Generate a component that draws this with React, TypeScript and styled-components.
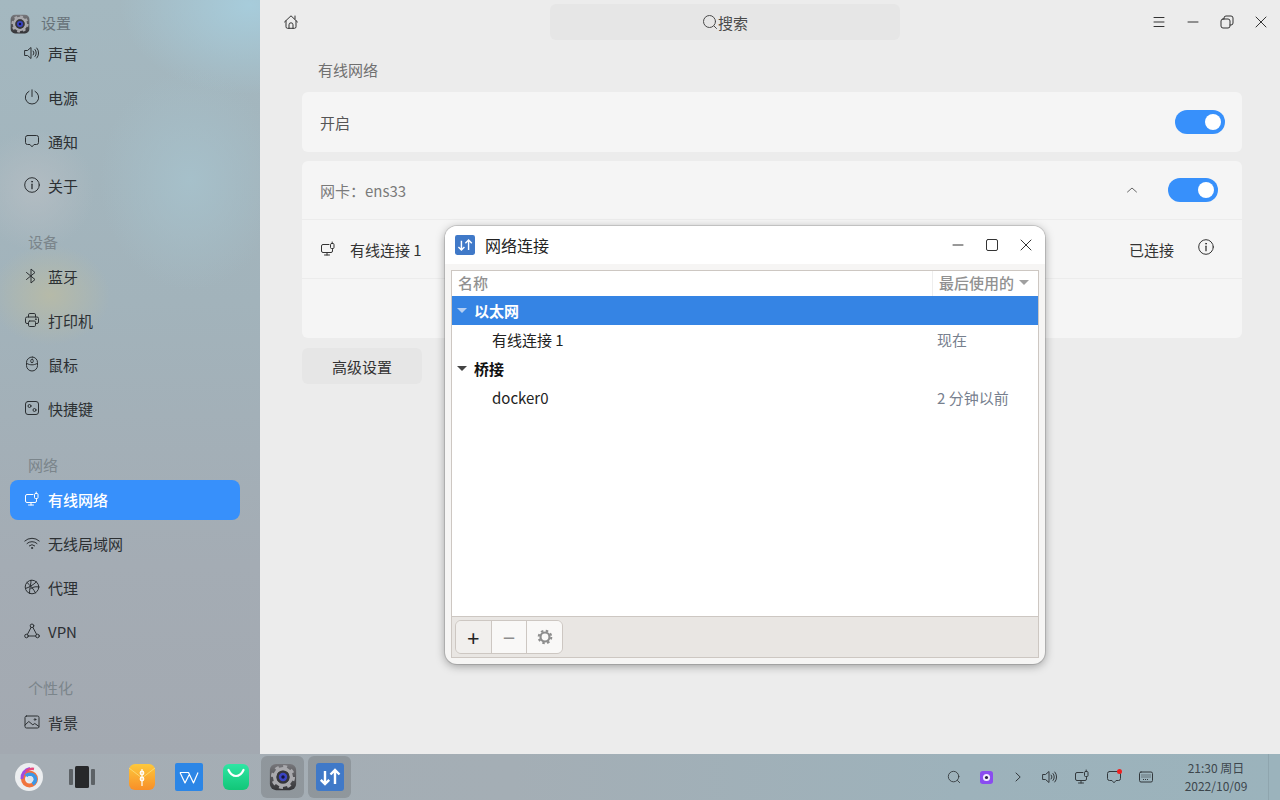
import React from 'react';
import styled, { createGlobalStyle } from 'styled-components';

const GlobalStyle = createGlobalStyle`
  html, body {
    margin: 0;
    padding: 0;
    width: 1280px;
    height: 800px;
    overflow: hidden;
    font-family: "Noto Sans CJK SC", "Noto Sans", sans-serif;
    font-size: 15px;
  }
  * { box-sizing: border-box; }
`;

const Line: React.FC<{ size?: number; sw?: number; children: React.ReactNode }> = ({ size = 16, sw = 1, children }) => (
  <svg width={size} height={size} viewBox="0 0 16 16" fill="none" stroke="currentColor" strokeWidth={sw} strokeLinecap="round" strokeLinejoin="round">
    {children}
  </svg>
);

const SoundIcon = () => (
  <Line>
    <path d="M1 5.500h2.500L7 2.500v11L3.500 10.500H1z" />
    <path d="M9.200 6a3 3 0 0 1 0 4M11 4.500a5.200 5.200 0 0 1 0 7M12.800 3a7.500 7.500 0 0 1 0 10" />
  </Line>
);
const PowerIcon = () => (
  <Line>
    <path d="M5 2.300a6.700 6.700 0 1 0 6 0" />
    <path d="M8 .8v6.700" />
  </Line>
);
const ChatIcon = () => (
  <Line>
    <path d="M3.500 2.500h9a2 2 0 0 1 2 2v5a2 2 0 0 1-2 2h-2.500L8 13.800 6 11.500H3.500a2 2 0 0 1-2-2v-5a2 2 0 0 1 2-2z" />
  </Line>
);
const InfoIcon = () => (
  <Line>
    <circle cx="8" cy="8" r="7.300" />
    <path d="M8 7.200v4.500" strokeWidth="1.300" />
    <circle cx="8" cy="4.700" r=".5" />
  </Line>
);
const BluetoothIcon = () => (
  <Line>
    <path d="M2.500 4.500l8.500 7L7 15V1l4 3.500L2.500 11.500" />
  </Line>
);
const PrinterIcon = () => (
  <Line>
    <path d="M4.500 5V2.800a1.300 1.300 0 0 1 1.300-1.300h4.400a1.300 1.300 0 0 1 1.300 1.300V5" />
    <path d="M4.500 11.500H3a1.500 1.500 0 0 1-1.500-1.500V6.500A1.500 1.500 0 0 1 3 5h10a1.500 1.500 0 0 1 1.500 1.500V10a1.500 1.500 0 0 1-1.500 1.500h-1.500" />
    <rect x="4.500" y="9" width="7" height="5.500" rx="1.200" />
    <circle cx="11.800" cy="7.200" r=".4" />
  </Line>
);
const MouseIcon = () => (
  <Line>
    <rect x="2.500" y="1" width="11" height="14" rx="5.500" />
    <path d="M2.800 7.500c2 1 3.500 1.300 5.200 1.300s3.200-.3 5.200-1.300" />
    <rect x="6.800" y="3.200" width="2.400" height="3.500" rx="1.200" />
  </Line>
);
const ShortcutIcon = () => (
  <Line>
    <rect x="1.500" y="1.500" width="13" height="13" rx="2.500" />
    <circle cx="5.500" cy="6" r="1.500" />
    <circle cx="10.500" cy="10" r="1.500" />
  </Line>
);
const WiredIcon = () => (
  <Line>
    <path d="M9 3.500H3a1.500 1.500 0 0 0-1.500 1.500v5A1.500 1.500 0 0 0 3 11.500h8A1.500 1.500 0 0 0 12.500 10V8.500" />
    <path d="M7 11.500v2.500M4.500 14h5" />
    <rect x="10.500" y="2.500" width="3.500" height="5" rx="1" />
    <path d="M12.200 1v1.500" />
  </Line>
);
const WifiIcon = () => (
  <Line>
    <path d="M.8 6a10.500 10.500 0 0 1 14.400 0M3 8.500a7.300 7.300 0 0 1 10 0M5.300 10.800a4 4 0 0 1 5.400 0" />
    <circle cx="8" cy="13" r=".6" />
  </Line>
);
const ProxyIcon = () => (
  <Line>
    <circle cx="8" cy="8" r="6.800" />
    <path d="M3 3.500c3 2.500 7 7 8.500 10.500M1.500 9.500C5 8.500 9 6 12.500 2.800M5.500 14.500C5 11 7.500 4 7 1.200M14.800 8c-2.500-.5-5-.5-8 1.500" />
  </Line>
);
const VpnIcon = () => (
  <Line>
    <circle cx="8" cy="2.800" r="1.800" />
    <circle cx="2.500" cy="13" r="1.800" />
    <circle cx="13.500" cy="13" r="1.800" />
    <path d="M7.100 4.400L3.400 11.400M8.900 4.400l3.700 7M4.300 13h7.400" />
  </Line>
);
const PictureIcon = () => (
  <Line>
    <rect x="1" y="2" width="14" height="12" rx="1.500" />
    <path d="M1 11l3.800-3.500 4 3.300 2-1.300L15 12.500" />
    <circle cx="11" cy="5.500" r=".8" />
  </Line>
);
const HomeIcon = () => (
  <Line>
    <path d="M1.500 8L8 1.800 14.500 8M3 6.800v6a1.500 1.500 0 0 0 1.500 1.500h7a1.500 1.500 0 0 0 1.500-1.500v-6" />
    <path d="M6 14.300v-3.500a2 2 0 0 1 4 0v3.500M12 2v3" />
  </Line>
);
const SearchIcon: React.FC<{ size?: number }> = ({ size = 16 }) => (
  <Line size={size}>
    <circle cx="7.500" cy="7.500" r="6" />
    <path d="M12 12l2.500 2.500" />
  </Line>
);
const RestoreIcon = () => (
  <Line>
    <rect x="2" y="5" width="9" height="9" rx="2" />
    <path d="M5 5V4a2 2 0 0 1 2-2h5a2 2 0 0 1 2 2v5a2 2 0 0 1-2 2h-1" />
  </Line>
);
const MenuIcon = () => (
  <Line>
    <path d="M3 3.500h10M3 8h10M3 12.500h10" />
  </Line>
);
const MinIcon = () => (
  <Line>
    <path d="M3 8h10" />
  </Line>
);
const CloseIcon = () => (
  <Line>
    <path d="M3 3l10 10M13 3L3 13" />
  </Line>
);
const MaxIcon = () => (
  <Line>
    <rect x="2.500" y="2.500" width="11" height="11" rx="1.500" />
  </Line>
);
const UpIcon = () => (
  <Line>
    <path d="M3.500 10L8 6l4.500 4" />
  </Line>
);
const GtIcon = () => (
  <Line>
    <path d="M6 4l4.200 4L6 12" />
  </Line>
);
const KeyboardIcon = () => (
  <Line>
    <rect x="1.500" y="3" width="13" height="10" rx="1.500" />
    <path d="M3.500 6h9M3.500 8h9M5 10.500h6" strokeDasharray="1 1" strokeLinecap="butt" strokeWidth="1.200" />
  </Line>
);

const GearTile: React.FC<{ size: number }> = ({ size }) => (
  <svg width={size} height={size} viewBox="0 0 32 32">
    <defs>
      <linearGradient id="gearbg" x1="0" y1="0" x2="0" y2="1">
        <stop offset="0" stopColor="#77777b" />
        <stop offset="1" stopColor="#343437" />
      </linearGradient>
    </defs>
    <rect x="1" y="1" width="30" height="30" rx="7" fill="url(#gearbg)" />
    <circle cx="16" cy="16" r="9.500" fill="none" stroke="#a9a9ad" strokeWidth="4" />
    <circle cx="16" cy="16" r="12" fill="none" stroke="#a9a9ad" strokeWidth="3.500" strokeDasharray="4.400 5" />
    <circle cx="16" cy="16" r="7.500" fill="#36363a" />
    <circle cx="16" cy="16" r="4.800" fill="#3a44c4" />
    <circle cx="16" cy="16" r="2" fill="#14143c" />
  </svg>
);

const NetTile: React.FC<{ size: number; sw?: number }> = ({ size, sw = 2 }) => (
  <svg width={size} height={size} viewBox="0 0 28 28">
    <rect width="28" height="28" rx="3" fill="#4079c8" />
    <path d="M9 8v13M4.800 16.800L9 21l4.200-4.200M19 21V7M14.500 11.500L19 7l4.500 4.500" fill="none" stroke="#fff" strokeWidth={sw} />
  </svg>
);

const LauncherLogo = () => (
  <svg width="28" height="28" viewBox="0 0 28 28">
    <circle cx="14" cy="14" r="14" fill="#eceef0" />
    <circle cx="14.500" cy="16" r="6.500" fill="none" stroke="#f0743e" strokeWidth="4" />
    <path d="M11 13a5.500 5.500 0 0 1 9.500 3.500 6 6 0 0 1-3 4.500" fill="none" stroke="#3a98e8" strokeWidth="3.500" />
    <path d="M7 16C6.500 11 10 6.500 15 5.500" fill="none" stroke="#a04be0" strokeWidth="3" />
    <path d="M11 8.500c2-2 5-3 8-2.500" fill="none" stroke="#e84a7c" strokeWidth="2.500" />
    <circle cx="15" cy="16" r="3" fill="#dfe6ee" />
  </svg>
);

const MultitaskIcon = () => (
  <svg width="26" height="22" viewBox="0 0 26 22">
    <rect x="0" y="3" width="4" height="16" rx="1" fill="#5d6266" />
    <rect x="6" y="0" width="14" height="22" rx="1.500" fill="#27282a" />
    <rect x="22" y="3" width="4" height="16" rx="1" fill="#5d6266" />
  </svg>
);

const ArchiveIcon = () => (
  <svg width="26" height="26" viewBox="0 0 26 26">
    <defs>
      <linearGradient id="archive" x1="0" y1="0" x2="0" y2="1">
        <stop offset="0" stopColor="#fdc83c" />
        <stop offset="1" stopColor="#f88f28" />
      </linearGradient>
    </defs>
    <rect width="26" height="26" rx="6" fill="url(#archive)" />
    <path d="M0 4l13 10L26 4" fill="none" stroke="#fbd870" strokeWidth="1" />
    <path d="M13 5v17" stroke="#fff" strokeWidth="1.200" />
    <circle cx="13" cy="9" r="1.800" fill="none" stroke="#fff" strokeWidth="1.200" />
    <circle cx="13" cy="15" r="1.800" fill="none" stroke="#fff" strokeWidth="1.200" />
  </svg>
);

const WpsIcon = () => (
  <svg width="28" height="28" viewBox="0 0 28 28">
    <rect width="28" height="28" rx="2" fill="#2c86e6" />
    <path d="M5 9.500h8.500L18.500 20 23 9.500M5 9.500L10 20l4-8" fill="none" stroke="#fff" strokeWidth="1.200" strokeLinejoin="round" />
  </svg>
);

const StoreIcon = () => (
  <svg width="26" height="26" viewBox="0 0 26 26">
    <defs>
      <linearGradient id="store" x1="0" y1="0" x2="0" y2="1">
        <stop offset="0" stopColor="#2fe6a4" />
        <stop offset="1" stopColor="#12c678" />
      </linearGradient>
    </defs>
    <rect width="26" height="26" rx="6" fill="url(#store)" />
    <path d="M5.500 6c2 4.500 4.800 6 7.500 6s5.500-1.500 7.500-6" fill="none" stroke="#fff" strokeWidth="2.200" strokeLinecap="round" />
  </svg>
);

const CameraTray = () => (
  <svg width="13" height="13" viewBox="0 0 14 14">
    <rect width="14" height="14" rx="3" fill="#8a4cf0" />
    <circle cx="7" cy="7" r="3.800" fill="#f2ecff" />
    <circle cx="7" cy="7" r="1.700" fill="#2a1f4a" />
  </svg>
);

const GearGlyph = () => (
  <svg width="16" height="16" viewBox="0 0 16 16">
    <circle cx="8" cy="8" r="4.500" fill="none" stroke="#8d8d8d" strokeWidth="2.200" />
    <circle cx="8" cy="8" r="6.300" fill="none" stroke="#8d8d8d" strokeWidth="2" strokeDasharray="2.500 2.450" />
  </svg>
);

const Screen = styled.div`
  width: 1280px;
  height: 800px;
  display: flex;
  flex-direction: column;
  position: relative;
  overflow: hidden;
`;

const Workspace = styled.div`
  flex: 1;
  min-height: 0;
  display: flex;
`;

const Sidebar = styled.aside`
  width: 260px;
  flex-shrink: 0;
  overflow: hidden;
  background:
    radial-gradient(60px 50px at 50px 295px, #b6baa8 0%, rgba(182, 186, 168, 0) 100%),
    radial-gradient(60px 60px at 35px 190px, #b2bcc2 0%, rgba(178, 188, 194, 0) 100%),
    radial-gradient(130px 90px at 250px 5px, #a7ccdb 0%, rgba(167, 204, 219, 0) 100%),
    radial-gradient(90px 110px at 190px 180px, #a6c0ca 0%, rgba(166, 192, 202, 0) 100%),
    linear-gradient(180deg, #a4b8c0 0%, #a2b3bb 40%, #a4acb4 75%, #a3a9b1 100%);
`;

const SidebarHead = styled.div`
  height: 34px;
  display: flex;
  align-items: flex-end;
  gap: 11px;
  padding-left: 10px;
`;

const AppTitle = styled.span`
  color: #68737a;
  font-size: 15px;
  line-height: 22px;
`;

const NavList = styled.nav`
  display: flex;
  flex-direction: column;
  gap: 4px;
  padding: 0 20px 0 10px;
`;

const NavItem = styled.div<{ $active?: boolean }>`
  height: 40px;
  display: flex;
  align-items: center;
  gap: 8px;
  padding: 0 0 2px 14px;
  border-radius: 8px;
  font-size: 15px;
  color: ${(p) => (p.$active ? '#ffffff' : '#2c3033')};
  background: ${(p) => (p.$active ? '#3790fb' : 'transparent')};
  font-weight: ${(p) => (p.$active ? 500 : 400)};
`;

const GroupLabel = styled.div`
  height: 43px;
  padding: 22px 0 0 18px;
  font-size: 15px;
  line-height: 20px;
  color: #7b858b;
`;

const Main = styled.main`
  flex: 1;
  min-width: 0;
  background: #ececec;
  display: flex;
  flex-direction: column;
`;

const TopBar = styled.header`
  height: 46px;
  display: grid;
  grid-template-columns: 290px 350px 1fr;
  align-items: start;
  color: #333;
`;

const HomeSlot = styled.div`
  padding: 14px 0 0 23px;
  display: flex;
`;

const SearchBox = styled.div`
  height: 36px;
  margin-top: 4px;
  border-radius: 6px;
  background: #e6e6e6;
  display: flex;
  align-items: center;
  justify-content: center;
  font-size: 15px;
  color: #4a4a4a;
`;

const WinButtons = styled.div`
  display: flex;
  justify-content: flex-end;
  gap: 18px;
  padding: 14px 11px 0 0;
`;

const Content = styled.div`
  padding: 10px 38px 0 42px;
`;

const SectionTitle = styled.div`
  padding-left: 16px;
  height: 36px;
  line-height: 28px;
  font-size: 15px;
  color: #707070;
`;

const Card = styled.section`
  background: #f5f5f5;
  border-radius: 6px;
  margin-bottom: 9px;
`;

const Row = styled.div<{ $h: number; $pr: number }>`
  height: ${(p) => p.$h}px;
  display: flex;
  align-items: center;
  padding: 0 ${(p) => p.$pr}px 0 18px;
  font-size: 15px;
  color: #555;
  & + & {
    border-top: 1px solid #ececec;
  }
`;

const Spacer = styled.div`
  flex: 1;
`;

const Toggle = styled.div`
  width: 50px;
  height: 24px;
  border-radius: 12px;
  background: #3790fb;
  position: relative;
  &::after {
    content: '';
    position: absolute;
    right: 4px;
    top: 4px;
    width: 16px;
    height: 16px;
    border-radius: 50%;
    background: #fff;
  }
`;

const Muted = styled.span`
  color: #7a7a7a;
`;

const ChevronSlot = styled.div`
  color: #666;
  display: flex;
  margin-right: 28px;
`;

const ConnName = styled.span`
  color: #333;
  margin-left: 14px;
`;

const ConnStatus = styled.span`
  color: #333;
  margin-right: 24px;
`;

const ConnIcon = styled.div<{ $raised?: boolean }>`
  color: #333;
  display: flex;
  margin-top: ${(p) => (p.$raised ? '-4px' : '0')};
`;

const AdvancedButton = styled.div`
  width: 120px;
  height: 36px;
  margin-top: 10px;
  border-radius: 6px;
  background: #e6e6e6;
  display: flex;
  align-items: center;
  justify-content: center;
  font-size: 15px;
  color: #333;
`;

const Dialog = styled.div`
  position: absolute;
  left: 445px;
  top: 226px;
  width: 600px;
  height: 438px;
  border-radius: 12px;
  background: #f6f5f4;
  box-shadow: 0 0 0 1px rgba(0, 0, 0, 0.12), 0 2px 10px rgba(0, 0, 0, 0.35);
  display: flex;
  flex-direction: column;
  overflow: hidden;
`;

const DialogHead = styled.div`
  height: 38px;
  flex-shrink: 0;
  background: #fff;
  display: flex;
  align-items: center;
  padding: 0 11px 0 10px;
  gap: 10px;
  color: #333;
`;

const DialogTitle = styled.span`
  font-size: 16px;
  color: #222;
  flex: 1;
`;

const DialogButtons = styled.div`
  display: flex;
  gap: 18px;
  color: #333;
`;

const Frame = styled.div`
  margin: 6px;
  flex: 1;
  min-height: 0;
  border: 1px solid #cdc7c2;
  display: flex;
  flex-direction: column;
  background: #fff;
`;

const TreeHead = styled.div`
  height: 25px;
  flex-shrink: 0;
  display: flex;
  font-size: 15px;
  font-weight: 500;
  color: #919191;
  line-height: 23px;
`;

const HeadName = styled.div`
  flex: 1;
  padding-left: 6px;
`;

const HeadUsed = styled.div`
  width: 106px;
  padding: 0 0 2px 6px;
  border-left: 1px solid #eeeeee;
  display: flex;
  align-items: center;
  gap: 5px;
`;

const Tree = styled.div`
  flex: 1;
  min-height: 0;
`;

const TreeRow = styled.div<{ $selected?: boolean; $group?: boolean }>`
  height: 29px;
  display: flex;
  align-items: center;
  padding-left: ${(p) => (p.$group ? '5px' : '40px')};
  font-size: 15px;
  font-weight: ${(p) => (p.$group ? 700 : 400)};
  color: ${(p) => (p.$selected ? '#ffffff' : p.$group ? '#111' : '#222')};
  background: ${(p) => (p.$selected ? '#3584e4' : 'transparent')};
`;

const Caret = styled.span<{ $color: string }>`
  width: 0;
  height: 0;
  margin-right: 7px;
  border-left: 5px solid transparent;
  border-right: 5px solid transparent;
  border-top: 5px solid ${(p) => p.$color};
`;

const RowName = styled.span`
  flex: 1;
`;

const RowUsed = styled.span`
  width: 101px;
  color: #77808e;
  font-weight: 400;
`;

const ToolBar = styled.div`
  height: 41px;
  flex-shrink: 0;
  border-top: 1px solid #cdc7c2;
  background: #e9e6e3;
  padding: 3px 0 0 3px;
  display: flex;
`;

const ToolGroup = styled.div`
  display: flex;
  width: 108px;
  height: 34px;
  border: 1px solid #cdc7c2;
  border-radius: 6px;
  overflow: hidden;
`;

const ToolButton = styled.div<{ $on?: boolean }>`
  flex: 1;
  display: flex;
  align-items: center;
  justify-content: center;
  background: ${(p) => (p.$on ? '#f1efed' : '#f9f8f7')};
  color: ${(p) => (p.$on ? '#222' : '#8d8d8d')};
  font-size: 22px;
  font-family: "Noto Sans", sans-serif;
  & + & {
    border-left: 1px solid #cdc7c2;
  }
`;

const Dock = styled.footer`
  height: 46px;
  flex-shrink: 0;
  display: flex;
  align-items: center;
  background: linear-gradient(90deg, #a5adb4 0%, #a4aeb5 40%, #9db2bb 75%, #9bb3bc 100%);
`;

const DockSlot = styled.div<{ $on?: boolean; $ml?: number }>`
  width: 43px;
  height: 42px;
  margin-left: ${(p) => p.$ml ?? 4}px;
  border-radius: 6px;
  display: flex;
  align-items: center;
  justify-content: center;
  background: ${(p) => (p.$on ? 'rgba(60, 60, 60, 0.2)' : 'transparent')};
`;

const Tray = styled.div`
  margin-left: auto;
  display: flex;
  align-items: center;
  height: 100%;
`;

const TraySlot = styled.div`
  width: 32px;
  display: flex;
  align-items: center;
  justify-content: center;
  color: #33393d;
  position: relative;
`;

const RedDot = styled.span`
  position: absolute;
  right: 8px;
  top: 0;
  width: 5px;
  height: 5px;
  border-radius: 50%;
  background: #f02020;
`;

const Clock = styled.div`
  width: 104px;
  margin-left: 2px;
  text-align: center;
  font-size: 12px;
  line-height: 18px;
  color: #3d464c;
`;

const DesktopEdge = styled.div`
  width: 12px;
  height: 100%;
  border-left: 1px solid #8fa5ae;
`;

const group1 = [
  { icon: <SoundIcon />, label: '声音' },
  { icon: <PowerIcon />, label: '电源' },
  { icon: <ChatIcon />, label: '通知' },
  { icon: <InfoIcon />, label: '关于' },
];
const group2 = [
  { icon: <BluetoothIcon />, label: '蓝牙' },
  { icon: <PrinterIcon />, label: '打印机' },
  { icon: <MouseIcon />, label: '鼠标' },
  { icon: <ShortcutIcon />, label: '快捷键' },
];
const group3 = [
  { icon: <WiredIcon />, label: '有线网络', active: true },
  { icon: <WifiIcon />, label: '无线局域网' },
  { icon: <ProxyIcon />, label: '代理' },
  { icon: <VpnIcon />, label: 'VPN' },
];
const group4 = [{ icon: <PictureIcon />, label: '背景' }];

type NavEntry = { icon: React.ReactNode; label: string; active?: boolean };

const NavGroup: React.FC<{ title?: string; items: NavEntry[] }> = ({ title, items }) => (
  <>
    {title && <GroupLabel>{title}</GroupLabel>}
    {items.map((item) => (
      <NavItem key={item.label} $active={item.active}>
        {item.icon}
        {item.label}
      </NavItem>
    ))}
  </>
);

const App: React.FC = () => {
  return (
    <Screen>
      <GlobalStyle />
      <Workspace>
        <Sidebar>
          <SidebarHead>
            <GearTile size={20} />
            <AppTitle>设置</AppTitle>
          </SidebarHead>
          <NavList>
            <NavGroup items={group1} />
            <NavGroup title="设备" items={group2} />
            <NavGroup title="网络" items={group3} />
            <NavGroup title="个性化" items={group4} />
          </NavList>
        </Sidebar>
        <Main>
          <TopBar>
            <HomeSlot>
              <HomeIcon />
            </HomeSlot>
            <SearchBox>
              <SearchIcon />
              搜索
            </SearchBox>
            <WinButtons>
              <MenuIcon />
              <MinIcon />
              <RestoreIcon />
              <CloseIcon />
            </WinButtons>
          </TopBar>
          <Content>
            <SectionTitle>有线网络</SectionTitle>
            <Card>
              <Row $h={60} $pr={17}>
                开启
                <Spacer />
                <Toggle />
              </Row>
            </Card>
            <Card>
              <Row $h={58} $pr={24}>
                <Muted>网卡：ens33</Muted>
                <Spacer />
                <ChevronSlot>
                  <UpIcon />
                </ChevronSlot>
                <Toggle />
              </Row>
              <Row $h={59} $pr={28}>
                <ConnIcon>
                  <WiredIcon />
                </ConnIcon>
                <ConnName>有线连接 1</ConnName>
                <Spacer />
                <ConnStatus>已连接</ConnStatus>
                <ConnIcon $raised>
                  <InfoIcon />
                </ConnIcon>
              </Row>
              <Row $h={60} $pr={24} />
            </Card>
            <AdvancedButton>高级设置</AdvancedButton>
          </Content>
        </Main>
      </Workspace>
      <Dock>
        <DockSlot $ml={7}>
          <LauncherLogo />
        </DockSlot>
        <DockSlot $ml={10}>
          <MultitaskIcon />
        </DockSlot>
        <DockSlot $ml={17}>
          <ArchiveIcon />
        </DockSlot>
        <DockSlot>
          <WpsIcon />
        </DockSlot>
        <DockSlot>
          <StoreIcon />
        </DockSlot>
        <DockSlot $on>
          <GearTile size={28} />
        </DockSlot>
        <DockSlot $on>
          <NetTile size={28} sw={2.4} />
        </DockSlot>
        <Tray>
          <TraySlot>
            <SearchIcon size={14} />
          </TraySlot>
          <TraySlot>
            <CameraTray />
          </TraySlot>
          <TraySlot>
            <GtIcon />
          </TraySlot>
          <TraySlot>
            <SoundIcon />
          </TraySlot>
          <TraySlot>
            <WiredIcon />
          </TraySlot>
          <TraySlot>
            <ChatIcon />
            <RedDot />
          </TraySlot>
          <TraySlot>
            <KeyboardIcon />
          </TraySlot>
          <Clock>
            21:30 周日
            <br />
            2022/10/09
          </Clock>
          <DesktopEdge />
        </Tray>
      </Dock>
      <Dialog>
        <DialogHead>
          <NetTile size={20} sw={2} />
          <DialogTitle>网络连接</DialogTitle>
          <DialogButtons>
            <MinIcon />
            <MaxIcon />
            <CloseIcon />
          </DialogButtons>
        </DialogHead>
        <Frame>
          <TreeHead>
            <HeadName>名称</HeadName>
            <HeadUsed>
              最后使用的
              <Caret $color="#a0a0a0" />
            </HeadUsed>
          </TreeHead>
          <Tree>
            <TreeRow $selected $group>
              <Caret $color="#b5cff2" />
              <RowName>以太网</RowName>
            </TreeRow>
            <TreeRow>
              <RowName>有线连接 1</RowName>
              <RowUsed>现在</RowUsed>
            </TreeRow>
            <TreeRow $group>
              <Caret $color="#444" />
              <RowName>桥接</RowName>
            </TreeRow>
            <TreeRow>
              <RowName>docker0</RowName>
              <RowUsed>2 分钟以前</RowUsed>
            </TreeRow>
          </Tree>
          <ToolBar>
            <ToolGroup>
              <ToolButton $on>+</ToolButton>
              <ToolButton>−</ToolButton>
              <ToolButton>
                <GearGlyph />
              </ToolButton>
            </ToolGroup>
          </ToolBar>
        </Frame>
      </Dialog>
    </Screen>
  );
};

export default App;
